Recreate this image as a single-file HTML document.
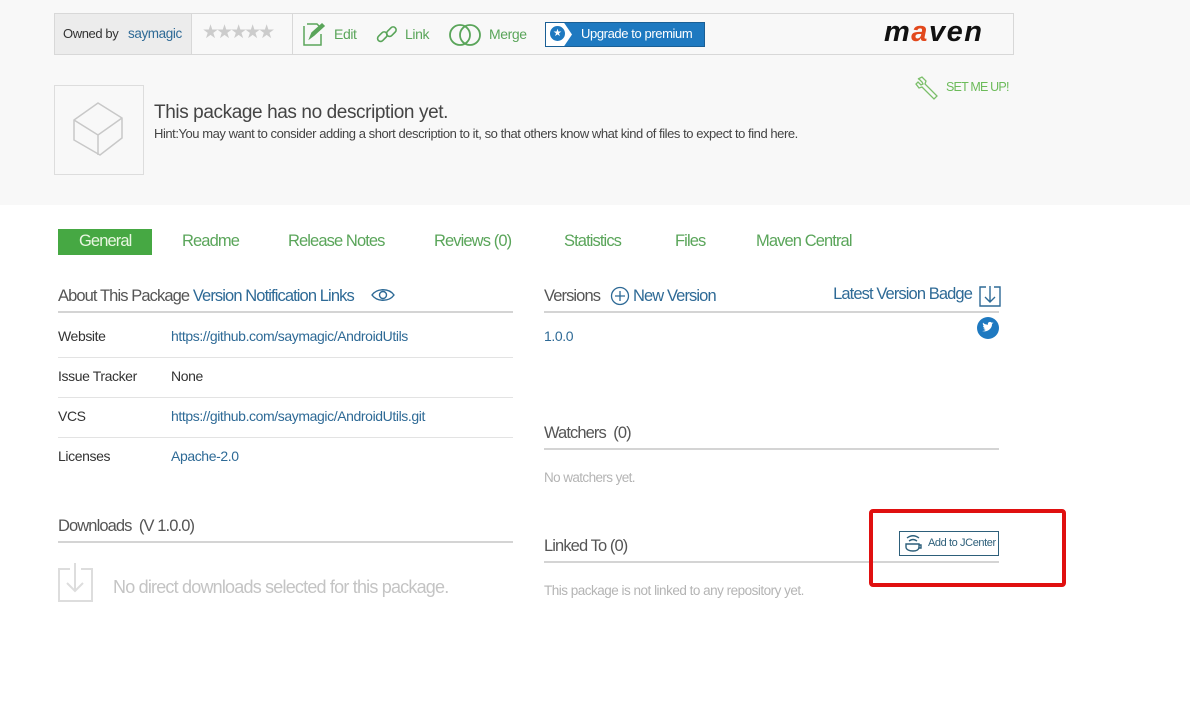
<!DOCTYPE html>
<html><head><meta charset="utf-8"><style>
body{margin:0;width:1190px;height:715px;background:#fff;position:relative;overflow:hidden;font-family:"Liberation Sans",sans-serif;letter-spacing:-0.4px}
.a{position:absolute;white-space:nowrap}
.top{position:absolute;left:0;top:0;width:1190px;height:205px;background:#f8f8f8}
.bar{position:absolute;left:54px;top:13px;width:958px;height:40px;border:1px solid #d8d8d8;background:#f8f8f8}
.g{color:#5aa55a}.b{color:#2e6a96}.d{color:#333}.l{color:#aaa}
.tab{font-size:16.5px;letter-spacing:-0.9px}
.hr{position:absolute;height:2px;background:#d4d4d4}
.hr1{position:absolute;height:1px;background:#e3e3e3}
</style></head><body>
<div class="top"></div>
<div class="bar"></div>
<div class="a" style="left:55px;top:14px;width:136px;height:40px;background:#ececec;border-right:1px solid #d8d8d8"></div>
<div class="a" style="left:292px;top:14px;width:1px;height:40px;background:#d8d8d8"></div>
<div class="a d" style="left:63px;top:26px;font-size:13px">Owned by</div>
<div class="a b" style="left:128px;top:26px;font-size:13.5px">saymagic</div>
<div class="a" style="left:202px;top:21px;font-size:19px;color:#ccc;letter-spacing:-3px">★★★★★</div>
<svg class="a" style="left:302px;top:22px" width="24" height="24" viewBox="0 0 24 24" fill="none" stroke="#5aa55a" stroke-width="1.5"><path d="M5 2h10l3 3M2 4v19h17V12"/><path d="M8 16l2-5 10-9 2 2-10 9z" fill="#5aa55a"/></svg>
<div class="a g" style="left:334px;top:26px;font-size:14px">Edit</div>
<svg class="a" style="left:375px;top:23px" width="24" height="24" viewBox="0 0 24 24" fill="none" stroke="#5aa55a" stroke-width="1.6"><rect x="2" y="11" width="11" height="6" rx="3" transform="rotate(-45 7 14)"/><rect x="11" y="6" width="11" height="6" rx="3" transform="rotate(-45 16 9)"/></svg>
<div class="a g" style="left:405px;top:26px;font-size:14px">Link</div>
<svg class="a" style="left:448px;top:23px" width="36" height="24" viewBox="0 0 36 24" fill="none" stroke="#5aa55a" stroke-width="1.8"><circle cx="12" cy="12" r="10"/><circle cx="22" cy="12" r="10"/></svg>
<div class="a g" style="left:489px;top:26px;font-size:14px">Merge</div>
<div class="a" style="left:545px;top:22px;width:158px;height:23px;background:#1e79c0;border:1px solid #1a5f95"></div>
<div class="a" style="left:546px;top:23px;width:26px;height:23px;background:#fff;clip-path:polygon(0 0,70% 0,100% 50%,70% 100%,0 100%)"></div>
<div class="a" style="left:550px;top:26px;width:15px;height:15px;border-radius:50%;background:#1e79c0;color:#fff;font-size:10px;line-height:15px;text-align:center;letter-spacing:0">★</div>
<div class="a" style="left:581px;top:26px;font-size:13px;color:#fff">Upgrade to premium</div>
<div class="a" style="left:884px;top:16px;font-size:29px;font-weight:bold;font-style:italic;color:#111;letter-spacing:1.5px">m<span style="color:#e2481c">a</span>ven</div>
<svg class="a" style="left:915px;top:75px" width="28" height="26" viewBox="0 0 28 26" fill="none" stroke="#7bbf6a" stroke-width="1.3"><path d="M3 4l4-2 4 4-1 3 12 12-3 3L7 12l-3 1-3-4 2-2 3 3 2-1-1-2-3-3z"/></svg>
<div class="a" style="left:946px;top:80px;font-size:12.5px;color:#6cbb5a;letter-spacing:-0.8px">SET ME UP!</div>
<div class="a" style="left:54px;top:85px;width:88px;height:88px;border:1px solid #ddd;background:#f8f8f8"></div>
<svg class="a" style="left:70px;top:100px" width="56" height="58" viewBox="0 0 56 58" fill="none" stroke="#c8c8c8" stroke-width="1.5"><path d="M28 3L52 18 52 38 30 55 4 40 4 20z"/><path d="M4 20l24 15 24-17M28 35v20"/></svg>
<div class="a" style="left:154px;top:102px;font-size:19px;color:#444">This package has no description yet.</div>
<div class="a" style="left:154px;top:126px;font-size:13px;color:#444;letter-spacing:-0.45px">Hint:You may want to consider adding a short description to it, so that others know what kind of files to expect to find here.</div>

<div class="a" style="left:58px;top:229px;width:94px;height:26px;background:#46a843"></div>
<div class="a tab" style="left:79px;top:232px;color:#e8f6e0">General</div>
<div class="a g tab" style="left:182px;top:232px">Readme</div>
<div class="a g tab" style="left:288px;top:232px">Release Notes</div>
<div class="a g tab" style="left:434px;top:232px">Reviews (0)</div>
<div class="a g tab" style="left:564px;top:232px">Statistics</div>
<div class="a g tab" style="left:675px;top:232px">Files</div>
<div class="a g tab" style="left:756px;top:232px">Maven Central</div>

<div class="a" style="left:58px;top:287px;font-size:16.5px;color:#555;letter-spacing:-0.9px">About This Package <span class="b">Version Notification Links</span></div>
<svg class="a" style="left:371px;top:288px" width="24" height="14" viewBox="0 0 24 14" fill="none" stroke="#2e6a96" stroke-width="1.4"><path d="M1 7c5-7 17-7 22 0-5 7-17 7-22 0z"/><circle cx="12" cy="7" r="3.5"/></svg>
<div class="hr" style="left:58px;top:311px;width:455px"></div>
<div class="a d" style="left:58px;top:328px;font-size:14px">Website</div>
<div class="a b" style="left:171px;top:328px;font-size:14px">https://github.com/saymagic/AndroidUtils</div>
<div class="hr1" style="left:58px;top:357px;width:455px"></div>
<div class="a d" style="left:58px;top:368px;font-size:14px">Issue Tracker</div>
<div class="a d" style="left:171px;top:368px;font-size:14px">None</div>
<div class="hr1" style="left:58px;top:397px;width:455px"></div>
<div class="a d" style="left:58px;top:408px;font-size:14px">VCS</div>
<div class="a b" style="left:171px;top:408px;font-size:14px">https://github.com/saymagic/AndroidUtils.git</div>
<div class="hr1" style="left:58px;top:437px;width:455px"></div>
<div class="a d" style="left:58px;top:448px;font-size:14px">Licenses</div>
<div class="a b" style="left:171px;top:448px;font-size:14px">Apache-2.0</div>
<div class="a" style="left:58px;top:517px;font-size:16.5px;color:#555;letter-spacing:-0.9px">Downloads &nbsp;(V 1.0.0)</div>
<div class="hr" style="left:58px;top:541px;width:455px"></div>
<svg class="a" style="left:57px;top:561px" width="37" height="42" viewBox="0 0 37 42" fill="none" stroke="#ddd" stroke-width="2"><path d="M13 8H2v32h33V8H24"/><path d="M18 2v28M10 22l8 8 8-8"/></svg>
<div class="a" style="left:113px;top:577px;font-size:18px;color:#c4c4c4;letter-spacing:-0.8px">No direct downloads selected for this package.</div>

<div class="a" style="left:544px;top:287px;font-size:16.5px;color:#555;letter-spacing:-0.9px">Versions</div>
<svg class="a" style="left:610px;top:286px" width="20" height="20" viewBox="0 0 20 20" fill="none" stroke="#2e6a96" stroke-width="1.3"><circle cx="10" cy="10" r="8.5"/><path d="M10 5v10M5 10h10"/></svg>
<div class="a b" style="left:633px;top:287px;font-size:16.5px;letter-spacing:-0.9px">New Version</div>
<div class="a b" style="right:218px;top:285px;font-size:16.5px;letter-spacing:-0.9px">Latest Version Badge</div>
<svg class="a" style="left:979px;top:285px" width="22" height="22" viewBox="0 0 22 22" fill="none" stroke="#2e6a96" stroke-width="1.4"><path d="M7 2H1v19h20V2h-6"/><path d="M11 1v16M6 12l5 5 5-5"/></svg>
<div class="hr" style="left:544px;top:311px;width:455px"></div>
<svg class="a" style="left:977px;top:317px" width="22" height="22" viewBox="0 0 22 22"><circle cx="11" cy="11" r="11" fill="#1e79c0"/><path d="M5 14c3 1 6 0 8-2 2-2 2-4 2-5l1.5-1.5-1.8.3c-.6-1-2-1.3-3-.5-.8.6-1 1.6-.7 2.4C8.7 7.6 7 7 6 5.6c-.5 1.4 0 2.6 1 3.3l-1 0c.2 1.2 1 2 2 2.2-.6.3-1 .3-1.6.2.4 1 1.3 1.6 2.3 1.6-1 .8-2.3 1.2-3.7 1.1z" fill="#fff"/></svg>
<div class="a b" style="left:544px;top:328px;font-size:14px">1.0.0</div>
<div class="a" style="left:544px;top:424px;font-size:16.5px;color:#555;letter-spacing:-0.9px">Watchers &nbsp;(0)</div>
<div class="hr" style="left:544px;top:448px;width:455px"></div>
<div class="a" style="left:544px;top:470px;font-size:13.5px;color:#b4b4b4;letter-spacing:-0.6px">No watchers yet.</div>
<div class="a" style="left:544px;top:537px;font-size:16.5px;color:#555;letter-spacing:-0.9px">Linked To (0)</div>
<div class="hr" style="left:544px;top:561px;width:455px"></div>
<div class="a" style="left:544px;top:583px;font-size:13.5px;color:#b4b4b4;letter-spacing:-0.5px">This package is not linked to any repository yet.</div>
<div class="a" style="left:899px;top:531px;width:98px;height:23px;border:1px solid #2d5f7a;background:#fff"></div>
<svg class="a" style="left:903px;top:533px" width="20" height="20" viewBox="0 0 20 20" fill="none" stroke="#2d5f7a" stroke-width="1.4"><path d="M4 5c4-3 8-3 12 0M6 8c3-2 5-2 8 0"/><path d="M3 11h13v3c0 3-3 4-6 4s-7-1-7-4z"/><path d="M16 12h2v3h-2"/></svg>
<div class="a" style="left:928px;top:537px;font-size:11px;color:#2d5f7a">Add to JCenter</div>
<div class="a" style="left:869px;top:509px;width:189px;height:70px;border:4px solid #e01010;border-radius:4px"></div>
</body></html>
